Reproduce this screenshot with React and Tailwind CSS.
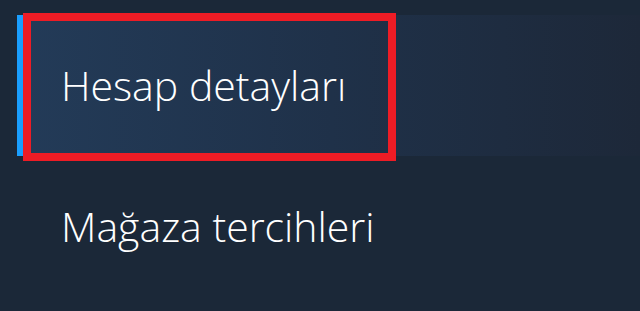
export default function App() {
  return (
    <div className="w-[640px] h-[311px] bg-[#1b2838] pt-[15px] pl-[17px] overflow-hidden font-['Open_Sans',sans-serif]">
      <div className="relative flex items-center h-[141px] border-l-[6px] border-[#1a9fff] bg-gradient-to-r from-[#233b58] via-[#1f3149] to-[#1d2839] pl-[38px]">
        <span className="text-[41px] font-[350] text-white leading-none">Hesap detayları</span>
        <div className="absolute left-0 top-[-2px] w-[373px] h-[148px] border-[8px] border-[#ee1c25]"></div>
      </div>
      <div className="flex items-center h-[141px] pl-[44px]">
        <span className="text-[41px] font-[350] text-white leading-none">Mağaza tercihleri</span>
      </div>
    </div>
  );
}
